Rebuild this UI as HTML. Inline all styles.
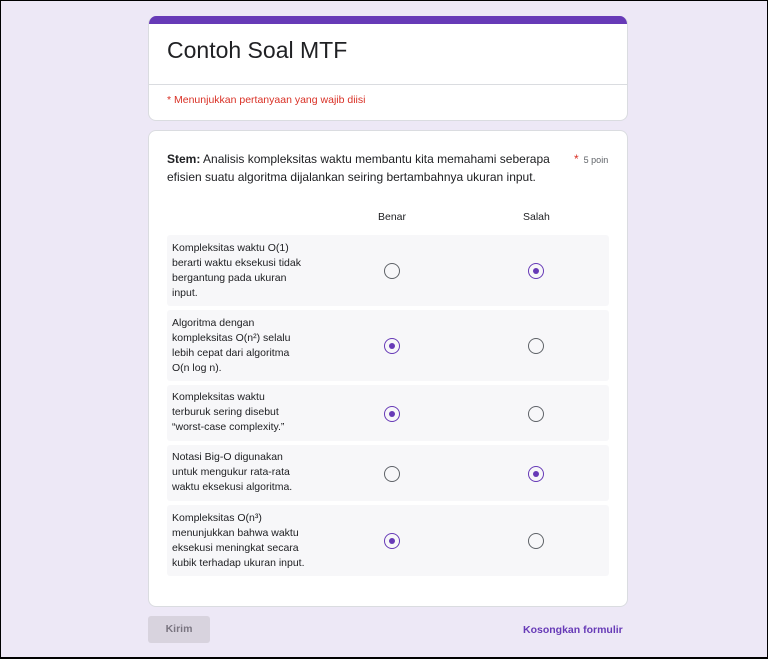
<!DOCTYPE html>
<html><head><meta charset="utf-8"><style>
*{margin:0;padding:0;box-sizing:border-box}
body{width:768px;height:659px;background:#ede8f6;font-family:"Liberation Sans",sans-serif;position:relative;overflow:hidden;border:1px solid #000;border-bottom:2px solid #000}
.card{position:absolute;left:147px;width:480px;background:#fff;border:1px solid #dadce0;border-radius:8px}
.row{position:absolute;left:166px;width:442px;background:#f7f7f9;border-radius:3px}
.row .t{position:absolute;left:5px;font-size:10.5px;line-height:15px;color:#202124;width:132px}
.r{position:absolute;width:16px;height:16px;border:1.5px solid #5f6368;border-radius:50%}
.r.on{border-color:#673ab7}
.r.on::after{content:"";position:absolute;left:3.5px;top:3.5px;width:6px;height:6px;border-radius:50%;background:#673ab7}
</style></head><body>
<div class="card" style="top:15px;height:105px;border-top:none;overflow:hidden">
<div style="height:8px;background:#673ab7"></div>
<div style="position:absolute;left:18px;top:21px;font-size:23px;color:#202124">Contoh Soal MTF</div>
<div style="position:absolute;left:0;right:0;top:68px;border-top:1px solid #dadce0"></div>
<div style="position:absolute;left:18px;top:78px;font-size:10.5px;color:#d93025">* Menunjukkan pertanyaan yang wajib diisi</div>
</div>
<div class="card" style="top:129px;height:477px">
<div style="position:absolute;left:18px;top:19px;width:400px;font-size:12px;line-height:18px;color:#202124"><b>Stem:</b> Analisis kompleksitas waktu membantu kita memahami seberapa efisien suatu algoritma dijalankan seiring bertambahnya ukuran input.</div>
<div style="position:absolute;left:425px;top:21px;font-size:9px;color:#5f6368"><span style="color:#d93025;font-size:12px">*</span>&nbsp; 5 poin</div>
<div style="position:absolute;left:229px;top:80px;font-size:10.5px;color:#202124">Benar</div>
<div style="position:absolute;left:374px;top:80px;font-size:10.5px;color:#202124">Salah</div>
</div>
<div class="row" style="top:234px;height:71px"><div class="t" style="top:6px">Kompleksitas waktu O(1) berarti waktu eksekusi tidak bergantung pada ukuran input.</div><div class="r" style="left:217px;top:28px"></div><div class="r on" style="left:361px;top:28px"></div></div>
<div class="row" style="top:309px;height:71px"><div class="t" style="top:6px">Algoritma dengan kompleksitas O(n²) selalu lebih cepat dari algoritma O(n log n).</div><div class="r on" style="left:217px;top:28px"></div><div class="r" style="left:361px;top:28px"></div></div>
<div class="row" style="top:384px;height:56px"><div class="t" style="top:5px">Kompleksitas waktu terburuk sering disebut “worst-case complexity.”</div><div class="r on" style="left:217px;top:21px"></div><div class="r" style="left:361px;top:21px"></div></div>
<div class="row" style="top:444px;height:56px"><div class="t" style="top:5px">Notasi Big-O digunakan untuk mengukur rata-rata waktu eksekusi algoritma.</div><div class="r" style="left:217px;top:21px"></div><div class="r on" style="left:361px;top:21px"></div></div>
<div class="row" style="top:504px;height:71px"><div class="t" style="top:6px;width:150px">Kompleksitas O(n³)<br>menunjukkan bahwa waktu<br>eksekusi meningkat secara<br>kubik terhadap ukuran input.</div><div class="r on" style="left:217px;top:28px"></div><div class="r" style="left:361px;top:28px"></div></div>
<div style="position:absolute;left:147px;top:615px;width:62px;height:27px;background:#d8d3de;border-radius:3px;font-size:10.5px;font-weight:bold;color:#7a7580;text-align:center;line-height:27px">Kirim</div>
<div style="position:absolute;left:522px;top:623px;font-size:10.5px;font-weight:bold;color:#673ab7">Kosongkan formulir</div>
</body></html>
